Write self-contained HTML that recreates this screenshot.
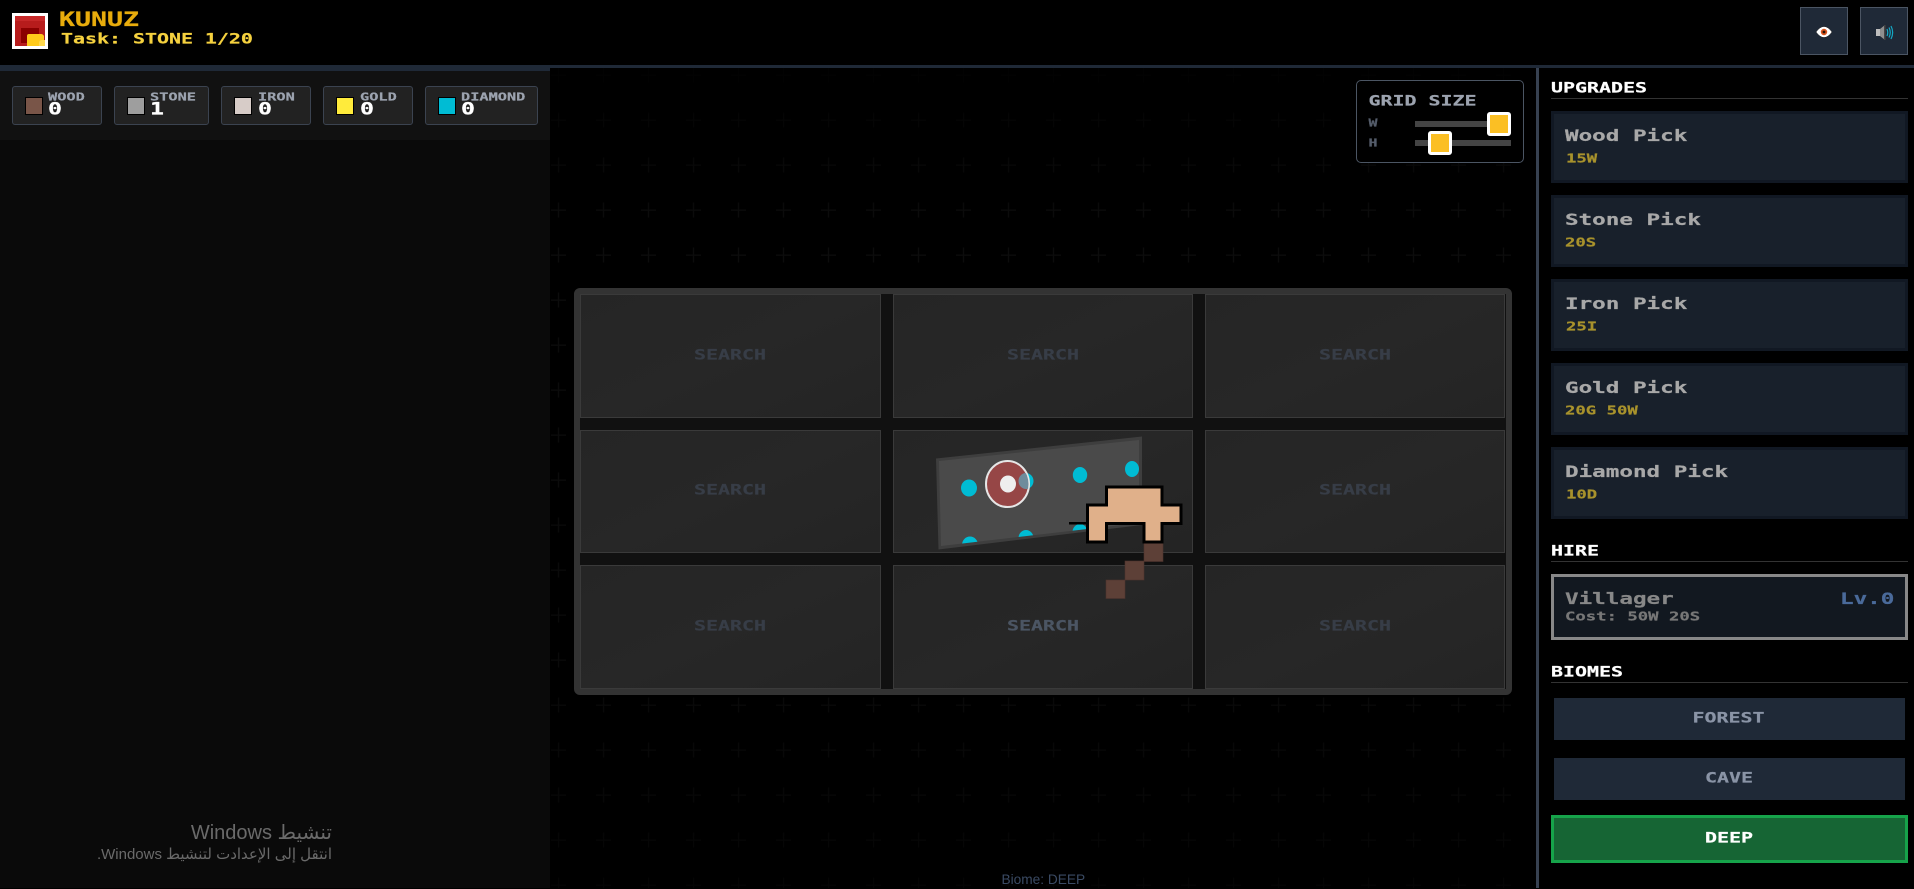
<!DOCTYPE html>
<html lang="en"><head><meta charset="utf-8"><title>KUNUZ</title>
<style>
html,body{margin:0;padding:0;background:#000;width:1914px;height:888px;overflow:hidden}
.a{position:absolute;box-sizing:border-box}
.t{position:absolute;font-family:"DejaVu Sans Mono","Liberation Mono",monospace;font-weight:bold;font-size:calc(var(--s)*1.661);line-height:1;white-space:pre;transform-origin:0 0;transform:scaleY(.72);margin-top:calc(var(--s)*-0.14);-webkit-text-stroke:.3px currentColor}
.chip{position:absolute;top:86px;height:39px;background:#222;border:1px solid #3b4350;border-radius:3px;box-sizing:border-box}
.sw{position:absolute;top:97px;width:18px;height:18px;border:1px solid #000;box-sizing:border-box}
.card{position:absolute;left:1551px;width:357px;height:72px;background:#18202b;border:3px solid #111823;box-sizing:border-box}
.cell{position:absolute;width:300px;background:linear-gradient(155deg,#252525,#272727 50%,#242424);border:1px solid #3a3a3a;box-sizing:border-box}
.ul{position:absolute;left:1551px;width:357px;height:1px;background:#333}
</style></head><body>

<!-- background plus pattern -->
<svg class="a" style="left:550px;top:68px" width="986" height="820">
<defs>
<pattern id="pl" width="45" height="45" patternUnits="userSpaceOnUse" x="0.5" y="-0.5">
<rect x="0.5" y="7" width="15" height="1.300" fill="#0c0c0c"/><rect x="7.400" y="0" width="1.300" height="15" fill="#0c0c0c"/>
</pattern>
<linearGradient id="fade" x1="0" y1="0" x2="0" y2="1"><stop offset="0" stop-color="#222"/><stop offset=".2" stop-color="#fff"/><stop offset=".75" stop-color="#ccc"/><stop offset="1" stop-color="#666"/></linearGradient>
<mask id="mk"><rect width="986" height="820" fill="url(#fade)"/></mask>
</defs>
<rect width="986" height="820" fill="url(#pl)" mask="url(#mk)"/>
</svg>

<!-- header -->
<div class="a" style="left:0;top:65px;width:1914px;height:3px;background:#1f2937"></div>
<div class="a" style="left:0;top:68px;width:550px;height:3px;background:#1f2937"></div>

<!-- logo -->
<svg class="a" style="left:12px;top:13px" width="36" height="36" viewBox="0 0 36 36">
<rect width="36" height="36" fill="#fff"/>
<rect x="3" y="3" width="30" height="30" fill="#b71c1c"/>
<rect x="3" y="3" width="30" height="5" fill="#c62828"/>
<rect x="9" y="15" width="18" height="15" fill="#8b0000"/>
<path d="M15 23q0-2 2-2h12q2 0 3 2v10h-17z" fill="#ffca1a"/>
<path d="M27 30q0-3 3-3h3v6h-6z" fill="#ffd84d"/>
</svg>
<div class="t" style="left:59px;top:13px;--s:16px;color:#e8ac0c">KUNUZ</div>
<div class="t" style="left:61px;top:34px;--s:12px;color:#f5d13f">Task: STONE 1/20</div>

<!-- header buttons -->
<div class="a" style="left:1800px;top:7px;width:48px;height:48px;background:#1f2937;border:1px solid #4b5563"></div>
<div class="a" style="left:1860px;top:7px;width:48px;height:48px;background:#1f2937;border:1px solid #4b5563"></div>
<svg class="a" style="left:1815px;top:25px" width="18" height="14" viewBox="0 0 18 14">
<path d="M1 7Q5 1.500 9 1.500T17 7Q13 12.500 9 12.500T1 7Z" fill="#fff" stroke="#222" stroke-width=".5"/>
<circle cx="9" cy="7" r="3.200" fill="#d9541e"/><circle cx="9" cy="7" r="1.400" fill="#2a1408"/>
</svg>
<svg class="a" style="left:1874px;top:23px" width="20" height="18" viewBox="0 0 20 18">
<path d="M2 6h4v7H2z" fill="#bdbdbd"/><path d="M6 6l5-4v15l-5-4z" fill="#8f8f8f"/><path d="M10 2h1.500v15H10z" fill="#444"/>
<path d="M13 6q1.500 3.500 0 7M15 4.500q2.500 5 0 10M17 3q3.300 6.500 0 13" fill="none" stroke="#14a7c4" stroke-width="1.200"/>
</svg>

<!-- left panel -->
<div class="a" style="left:0;top:71px;width:550px;height:817px;background:#0a0a0a"></div>
<div class="a" style="left:0;top:71px;width:550px;height:69px;background:#111"></div>
<div class="chip" style="left:12px;width:90px"></div>
<div class="chip" style="left:114px;width:95px"></div>
<div class="chip" style="left:221px;width:90px"></div>
<div class="chip" style="left:323px;width:90px"></div>
<div class="chip" style="left:425px;width:113px"></div>
<div class="sw" style="left:25px;background:#795548"></div>
<div class="sw" style="left:127px;background:#9e9e9e"></div>
<div class="sw" style="left:234px;background:#d7ccc8"></div>
<div class="sw" style="left:336px;background:#ffeb3b"></div>
<div class="sw" style="left:438px;background:#00bcd4"></div>
<div class="t" style="left:48px;top:93px;--s:9.2px;color:#9ca3af">WOOD</div>
<div class="t" style="left:150px;top:93px;--s:9.2px;color:#9ca3af">STONE</div>
<div class="t" style="left:258px;top:93px;--s:9.2px;color:#9ca3af">IRON</div>
<div class="t" style="left:360px;top:93px;--s:9.2px;color:#9ca3af">GOLD</div>
<div class="t" style="left:461px;top:93px;--s:9.2px;color:#9ca3af">DIAMOND</div>
<div class="t" style="left:48px;top:103px;--s:14px;color:#fff">0</div>
<div class="t" style="left:150px;top:103px;--s:14px;color:#fff">1</div>
<div class="t" style="left:258px;top:103px;--s:14px;color:#fff">0</div>
<div class="t" style="left:360px;top:103px;--s:14px;color:#fff">0</div>
<div class="t" style="left:461px;top:103px;--s:14px;color:#fff">0</div>

<!-- watermark -->
<div class="a" dir="rtl" style="right:1582px;top:820px;width:320px;text-align:right;font:20px/26px 'Liberation Sans','DejaVu Sans',sans-serif;color:#6a6a6a;white-space:nowrap">تنشيط Windows</div>
<div class="a" dir="rtl" style="right:1582px;top:846px;width:320px;text-align:right;font:15px/18px 'Liberation Sans','DejaVu Sans',sans-serif;color:#6a6a6a;white-space:nowrap">انتقل إلى الإعدادت لتنشيط Windows.</div>

<!-- grid panel -->
<div class="a" style="left:574px;top:288px;width:938px;height:407px;background:#111;border:6px solid #333;border-radius:6px"></div>
<div class="cell" style="left:580px;width:301px;top:294px;height:124px"></div>
<div class="cell" style="left:893px;top:294px;height:124px"></div>
<div class="cell" style="left:1205px;top:294px;height:124px"></div>
<div class="cell" style="left:580px;width:301px;top:430px;height:123px"></div>
<div class="cell" style="left:893px;top:430px;height:123px"></div>
<div class="cell" style="left:1205px;top:430px;height:123px"></div>
<div class="cell" style="left:580px;width:301px;top:565px;height:124px"></div>
<div class="cell" style="left:893px;top:565px;height:124px"></div>
<div class="cell" style="left:1205px;top:565px;height:124px"></div>
<div class="t" style="left:694px;top:350px;--s:12px;color:#373d47">SEARCH</div>
<div class="t" style="left:1007px;top:350px;--s:12px;color:#373d47">SEARCH</div>
<div class="t" style="left:1319px;top:350px;--s:12px;color:#373d47">SEARCH</div>
<div class="t" style="left:694px;top:485px;--s:12px;color:#373d47">SEARCH</div>
<div class="t" style="left:1319px;top:485px;--s:12px;color:#373d47">SEARCH</div>
<div class="t" style="left:694px;top:621px;--s:12px;color:#373d47">SEARCH</div>
<div class="t" style="left:1007px;top:621px;--s:12px;color:#4b5563">SEARCH</div>
<div class="t" style="left:1319px;top:621px;--s:12px;color:#373d47">SEARCH</div>

<!-- rock plate, ring, pick -->
<svg class="a" style="left:880px;top:420px" width="340" height="200" viewBox="880 420 340 200">
<defs>
<clipPath id="rk"><path d="M939 461L1139 440V523L941 546Z"/></clipPath>
<clipPath id="rg"><ellipse cx="1007.500" cy="484" rx="21" ry="22.500"/></clipPath>
</defs>
<path d="M936 458.500L1142 436.500V525L938.500 549.500Z" fill="#3e3e3e"/>
<path d="M939 461L1139 440V523L941 546Z" fill="#4a4a4a"/>
<g clip-path="url(#rk)" fill="#00bcd4">
<ellipse cx="969" cy="488" rx="8" ry="8.500"/>
<ellipse cx="1026" cy="481" rx="7.500" ry="8"/>
<ellipse cx="1080" cy="475" rx="7.200" ry="8"/>
<ellipse cx="1132" cy="469" rx="7" ry="8"/>
<ellipse cx="970" cy="545" rx="8" ry="8.500"/>
<ellipse cx="1026" cy="538" rx="7.500" ry="8"/>
<ellipse cx="1080" cy="532" rx="7.500" ry="8"/>
</g>
<ellipse cx="1007.500" cy="484" rx="21.500" ry="23" fill="#964646" stroke="#e6e6e6" stroke-width="2"/>
<ellipse cx="1026" cy="481" rx="7.500" ry="8" fill="#6f8c9c" clip-path="url(#rg)"/>
<ellipse cx="1008" cy="484" rx="8" ry="8.500" fill="#eee"/>
<rect x="1069" y="522" width="22" height="2.500" fill="#000"/>
<rect x="1144" y="543" width="19" height="18.500" fill="#5d4037" stroke="#4e342e" stroke-width=".6"/>
<rect x="1125" y="561" width="19" height="19" fill="#5d4037" stroke="#4e342e" stroke-width=".6"/>
<rect x="1106" y="580" width="19" height="18.500" fill="#5d4037" stroke="#4e342e" stroke-width=".6"/>
<path d="M1106.500 487H1162V505H1181V523.500H1162V542H1144V523.500H1106.500V542H1087.500V505H1106.500Z" fill="#e0b08a" stroke="#000" stroke-width="3"/>
</svg>

<div class="a" style="left:1001.500px;top:871px;font:13.700px/18px 'Liberation Sans',sans-serif;color:#3a4a63;white-space:nowrap">Biome: DEEP</div>

<!-- grid size -->
<div class="a" style="left:1356px;top:80px;width:168px;height:83px;background:#000;border:1px solid #4b5563;border-radius:5px"></div>
<div class="t" style="left:1368.500px;top:96px;--s:12px;color:#9ca3af">GRID SIZE</div>
<div class="t" style="left:1368.500px;top:119px;--s:9px;color:#555d6b">W</div>
<div class="t" style="left:1368.500px;top:139px;--s:9px;color:#555d6b">H</div>
<div class="a" style="left:1415px;top:121px;width:96px;height:6px;background:#444"></div>
<div class="a" style="left:1415px;top:140px;width:96px;height:6px;background:#444"></div>
<div class="a" style="left:1487px;top:112px;width:24px;height:24px;background:#fbbf24;border:3px solid #fff;border-radius:3px"></div>
<div class="a" style="left:1428px;top:131px;width:24px;height:24px;background:#fbbf24;border:3px solid #fff;border-radius:3px"></div>

<!-- sidebar -->
<div class="a" style="left:1536px;top:68px;width:3px;height:820px;background:#374151"></div>
<div class="t" style="left:1551px;top:83px;--s:12px;color:#fff">UPGRADES</div>
<div class="ul" style="top:98px"></div>

<div class="card" style="top:111px"></div>
<div class="card" style="top:195px"></div>
<div class="card" style="top:279px"></div>
<div class="card" style="top:363px"></div>
<div class="card" style="top:447px"></div>
<div class="t" style="left:1565px;top:130px;--s:13.6px;color:#a8a8a8">Wood Pick</div>
<div class="t" style="left:1566px;top:154px;--s:10.400px;color:#a8922c">15W</div>
<div class="t" style="left:1565px;top:214px;--s:13.6px;color:#a8a8a8">Stone Pick</div>
<div class="t" style="left:1565px;top:238px;--s:10.400px;color:#a8922c">20S</div>
<div class="t" style="left:1565px;top:298px;--s:13.6px;color:#a8a8a8">Iron Pick</div>
<div class="t" style="left:1566px;top:322px;--s:10.400px;color:#a8922c">25I</div>
<div class="t" style="left:1565px;top:382px;--s:13.6px;color:#a8a8a8">Gold Pick</div>
<div class="t" style="left:1565px;top:406px;--s:10.400px;color:#a8922c">20G 50W</div>
<div class="t" style="left:1565px;top:466px;--s:13.6px;color:#a8a8a8">Diamond Pick</div>
<div class="t" style="left:1566px;top:490px;--s:10.400px;color:#a8922c">10D</div>

<div class="t" style="left:1551px;top:546px;--s:12px;color:#fff">HIRE</div>
<div class="ul" style="top:561px"></div>
<div class="a" style="left:1551px;top:574px;width:357px;height:66px;background:#121820;border:3px solid #888"></div>
<div class="t" style="left:1565px;top:593px;--s:13.6px;color:#888">Villager</div>
<div class="t" style="left:1840px;top:593px;--s:13.6px;color:#4a6a9a">Lv.0</div>
<div class="t" style="left:1565px;top:612px;--s:10.400px;color:#777">Cost: 50W 20S</div>

<div class="t" style="left:1551px;top:667px;--s:12px;color:#fff">BIOMES</div>
<div class="ul" style="top:682px"></div>
<div class="a" style="left:1554px;top:698px;width:351px;height:42px;background:#1f2937"></div>
<div class="a" style="left:1554px;top:758px;width:351px;height:42px;background:#1f2937"></div>
<div class="a" style="left:1551px;top:815px;width:357px;height:48px;background:#166534;border:3px solid #16a34a"></div>
<div class="t" style="left:1692.500px;top:713px;--s:12px;color:#8a94a6">FOREST</div>
<div class="t" style="left:1705px;top:773px;--s:12px;color:#8a94a6">CAVE</div>
<div class="t" style="left:1705px;top:833px;--s:12px;color:#fff">DEEP</div>

</body></html>
